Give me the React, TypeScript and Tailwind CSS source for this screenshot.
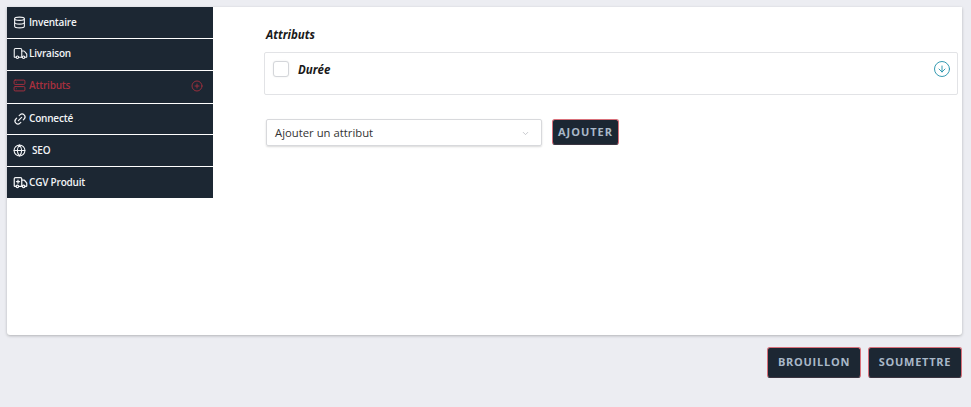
import { ArrowDownCircle, ChevronDown, Database, Globe, Link2, PlusCircle, Truck, Server } from "lucide-react";

const font = "font-['Open_Sans',sans-serif]";

function CgvIcon() {
  return (
    <svg width="15" height="15" viewBox="0 0 24 24" fill="none" stroke="currentColor" strokeWidth="2" strokeLinecap="round" strokeLinejoin="round">
      <path d="M14 18V6a2 2 0 0 0-2-2H4a2 2 0 0 0-2 2v11a1 1 0 0 0 1 1h2" />
      <path d="M15 18H9" />
      <path d="M19 18h2a1 1 0 0 0 1-1v-3.65a1 1 0 0 0-.22-.624l-3.48-4.35A1 1 0 0 0 17.52 8H14" />
      <circle cx="17" cy="18" r="2" />
      <circle cx="7" cy="18" r="2" />
      <path d="M8 8v5M5.5 10.5h5" />
    </svg>
  );
}

function NavItem({ icon, label, active, gap, row }: { icon: React.ReactNode; label: string; active?: boolean; gap: string; row: string }) {
  return (
    <div className={`flex ${row} items-center border-b border-white bg-[#1c2733] pl-[6px] pr-[10px] last:border-b-0 ${active ? "text-[#a8303e]" : "text-[#f2f4f6]"}`}>
      {icon}
      <span className={`${gap} text-[10px] font-semibold tracking-[-0.2px]`}>{label}</span>
      {active && <PlusCircle size={12} strokeWidth={1.75} className="ml-auto" />}
    </div>
  );
}

function DarkButton({ label, className }: { label: string; className: string }) {
  return (
    <button type="button" className={`rounded-[3px] border border-[#d9707a] border-b-[#3a3440] bg-[#1c2733] font-bold text-[#a9b8c8] ${className}`}>
      {label}
    </button>
  );
}

export default function App() {
  return (
    <div className={`flex h-[407px] w-[971px] flex-col bg-[#ecedf2] pl-[7px] pr-[9px] pt-[7px] ${font}`}>
      <div className="flex h-[328px] rounded-b-[3px] bg-white shadow-[0_1px_3px_rgba(0,0,0,0.25)]">
        <aside className="w-[206px] shrink-0">
          <NavItem row="h-[32px]" gap="ml-[3px]" label="Inventaire" icon={<Database size={13} strokeWidth={2} />} />
          <NavItem row="h-[32px] pb-[2px]" gap="ml-[1px]" label="Livraison" icon={<Truck size={15} strokeWidth={1.75} />} />
          <NavItem row="h-[33px] pb-[3px]" gap="ml-[3px]" label="Attributs" active icon={<Server size={13} strokeWidth={1.75} />} />
          <NavItem row="h-[31px] pb-[1px]" gap="ml-[2px]" label="Connecté" icon={<Link2 size={14} strokeWidth={2} className="-rotate-45" />} />
          <NavItem row="h-[32px]" gap="ml-[6px]" label="SEO" icon={<Globe size={13} strokeWidth={2} />} />
          <NavItem row="h-[31px]" gap="ml-[1px]" label="CGV Produit" icon={<CgvIcon />} />
        </aside>
        <main className="flex-1 pl-[51px] pr-[4px] pt-[20px]">
          <h3 className="ml-[2px] text-[11.5px] font-bold italic leading-[16px] text-[#1a1a1a]">Attributs</h3>
          <div className="mt-[9px] flex h-[43px] items-start rounded-[2px] border border-[#e2e3e6] pl-[8px] pr-[6px] pt-[7px]">
            <span className="mt-[1px] h-[16px] w-[16px] rounded-[3px] border border-[#d4d6da] bg-white shadow-[0_0_2px_rgba(0,0,0,0.08)]" />
            <span className="ml-[9px] mt-[2px] text-[11.5px] font-bold italic leading-[16px] text-[#1a1a1a]">Durée</span>
            <ArrowDownCircle size={18} strokeWidth={1.25} className="ml-auto text-[#2a94ad]" />
          </div>
          <div className="ml-[2px] mt-[24px] flex items-start">
            <div className="flex h-[27px] w-[276px] items-center justify-between rounded-[2px] border border-[#d8d9dc] pl-[8px] pr-[11px] pt-[1px] shadow-[0_1px_2px_rgba(0,0,0,0.15)]">
              <span className="text-[11.3px] text-[#333]">Ajouter un attribut</span>
              <ChevronDown size={9} className="text-[#b5b8bd]" />
            </div>
            <DarkButton label="AJOUTER" className="ml-[10px] h-[26px] w-[67px] text-[11px] tracking-[1px]" />
          </div>
        </main>
      </div>
      <div className="mt-[12px] flex justify-end gap-[7px]">
        <DarkButton label="BROUILLON" className="h-[31px] w-[94px] text-[11px] tracking-[0.75px]" />
        <DarkButton label="SOUMETTRE" className="h-[31px] w-[94px] text-[11px] tracking-[0.75px]" />
      </div>
    </div>
  );
}
